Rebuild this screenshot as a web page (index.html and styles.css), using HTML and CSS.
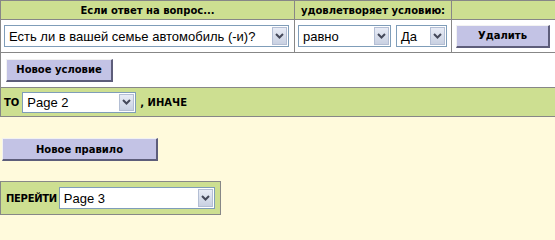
FILE: index.html
```html
<!DOCTYPE html>
<html lang="ru">
<head>
<meta charset="utf-8">
<title>Правила</title>
<link rel="stylesheet" href="styles.css">
</head>
<body>
<table class="rules">
  <colgroup><col class="c1"><col class="c2"><col class="c3"></colgroup>
  <tr class="head">
    <th>Если ответ на вопрос...</th>
    <th>удовлетворяет условию:</th>
    <th></th>
  </tr>
  <tr class="cond">
    <td>
      <div class="sel w-q"><span class="val">Есть ли в вашей семье автомобиль (-и)?</span><span class="arrow"><svg viewBox="0 0 9 6" width="9" height="6"><path d="M1 1 L4.5 4.5 L8 1" fill="none" stroke="#45495a" stroke-width="2"/></svg></span></div>
    </td>
    <td>
      <div class="pair">
        <div class="sel w-op"><span class="val">равно</span><span class="arrow"><svg viewBox="0 0 9 6" width="9" height="6"><path d="M1 1 L4.5 4.5 L8 1" fill="none" stroke="#45495a" stroke-width="2"/></svg></span></div>
        <div class="sel w-yn"><span class="val">Да</span><span class="arrow"><svg viewBox="0 0 9 6" width="9" height="6"><path d="M1 1 L4.5 4.5 L8 1" fill="none" stroke="#45495a" stroke-width="2"/></svg></span></div>
      </div>
    </td>
    <td><button class="btn del">Удалить</button></td>
  </tr>
  <tr class="add">
    <td colspan="3"><button class="btn add-btn">Новое условие</button></td>
  </tr>
  <tr class="then">
    <td colspan="3">
      <div class="line">
        <span class="lbl">ТО</span>
        <div class="sel w-then"><span class="val">Page 2</span><span class="arrow"><svg viewBox="0 0 9 6" width="9" height="6"><path d="M1 1 L4.5 4.5 L8 1" fill="none" stroke="#45495a" stroke-width="2"/></svg></span></div>
        <span class="lbl">, ИНАЧЕ</span>
      </div>
    </td>
  </tr>
</table>

<div class="new-rule"><button class="btn rule-btn">Новое правило</button></div>

<div class="goto">
  <span class="lbl goto-lbl">ПЕРЕЙТИ</span>
  <div class="sel w-goto"><span class="val">Page 3</span><span class="arrow"><svg viewBox="0 0 9 6" width="9" height="6"><path d="M1 1 L4.5 4.5 L8 1" fill="none" stroke="#45495a" stroke-width="2"/></svg></span></div>
</div>
</body>
</html>
```

FILE: styles.css
```css
html, body {
  margin: 0;
  padding: 0;
  background: #fffadc;
  font-family: "DejaVu Sans", Verdana, sans-serif;
}

.rules {
  border-collapse: collapse;
  width: 555px;
  table-layout: fixed;
  border: 1px solid #878787;
}
.c1 { width: 294px; }
.c2 { width: 157px; }
.c3 { width: 104px; }

.rules th, .rules td {
  border: 1px solid #878787;
  padding: 0;
}

.head th {
  background: #cddf91;
  height: 18px;
  font-size: 10px;
  font-weight: bold;
  color: #000;
  text-align: center;
}

.cond td {
  background: #fff;
  height: 32px;
  vertical-align: middle;
}
.cond td:first-child { padding-left: 3px; }
.cond td:nth-child(2) { padding-left: 3px; }
.cond td:nth-child(3) { padding-left: 4px; }

.pair {
  display: flex;
  gap: 5px;
}

.add td {
  background: #fff;
  height: 34px;
  padding-left: 5px;
  vertical-align: middle;
}

.then td {
  background: #cddf91;
  height: 28px;
  vertical-align: middle;
}

.line {
  display: flex;
  align-items: center;
  padding-left: 3px;
}
.line .lbl:first-child { margin-right: 3px; }
.line .lbl:last-child { margin-left: 4px; }

.lbl {
  font-size: 10px;
  font-weight: bold;
  color: #000;
}

/* pseudo select */
.sel {
  display: flex;
  align-items: stretch;
  box-sizing: border-box;
  height: 22px;
  border: 1px solid #7f9db9;
  background: #fff;
  font-family: "Liberation Sans", Arial, sans-serif;
  font-size: 13px;
  color: #000;
}
.sel .val {
  flex: 1;
  display: flex;
  align-items: center;
  padding-left: 4px;
  white-space: nowrap;
  overflow: hidden;
}
.sel .arrow {
  width: 15px;
  margin: 1px;
  display: flex;
  align-items: center;
  justify-content: center;
  background: linear-gradient(#e8ecf6, #c9d1e2);
  border: 1px solid #b3bed4;
  box-sizing: border-box;
}

.w-q { width: 285px; }
.w-op { width: 93px; }
.w-yn { width: 51px; }
.w-then { width: 114px; height: 21px; }
.w-goto { width: 156px; height: 22px; }

/* buttons */
.btn {
  box-sizing: border-box;
  background: #c3c3e5;
  border-style: solid;
  border-width: 1px 2px 2px 1px;
  border-color: #f2f2f2 #5d5d7a #5d5d7a #f2f2f2;
  font-family: "DejaVu Sans", Verdana, sans-serif;
  font-size: 10px;
  font-weight: bold;
  color: #000;
  padding: 0;
  height: 23px;
  display: block;
}
.del { width: 94px; }
.add-btn { width: 107px; }

.new-rule {
  padding: 21px 0 0 2px;
}
.rule-btn { width: 156px; height: 23px; }

.goto {
  margin-top: 20px;
  box-sizing: border-box;
  width: 221px;
  height: 34px;
  background: #cddf91;
  border: 1px solid #878787;
  display: flex;
  align-items: center;
  padding-left: 5px;
  gap: 2px;
}
.goto-lbl { letter-spacing: -0.3px; }
```
